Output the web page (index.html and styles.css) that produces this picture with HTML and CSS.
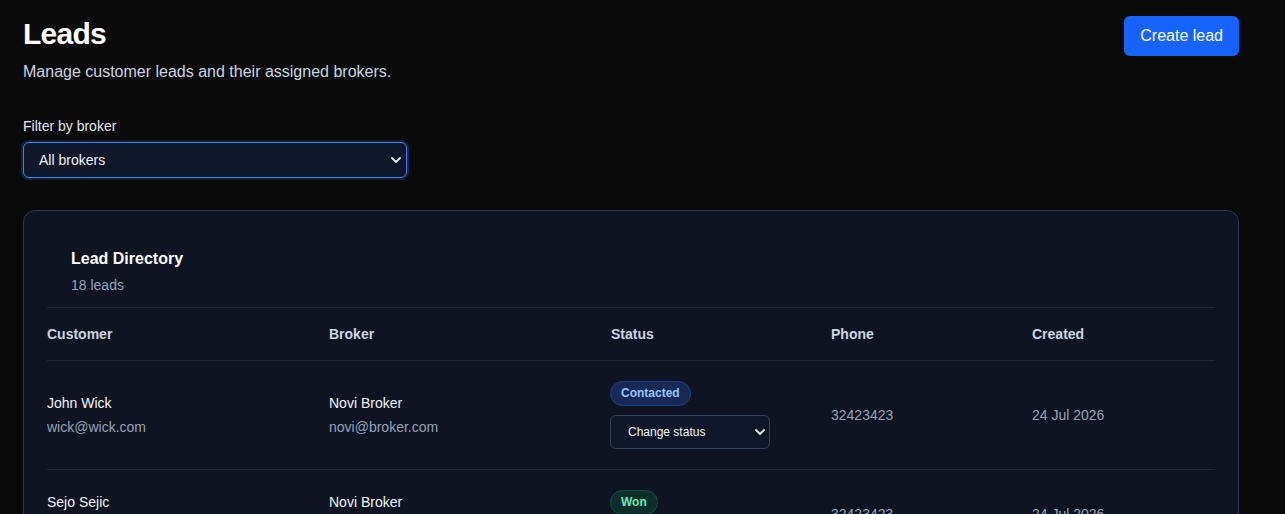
FILE: index.html
```html
<!DOCTYPE html>
<html lang="en">
<head>
<meta charset="utf-8">
<title>Leads</title>
<link rel="stylesheet" href="styles.css">
</head>
<body>
<main class="page">
  <header class="page-head">
    <div>
      <h1 class="title">Leads</h1>
      <p class="subtitle">Manage customer leads and their assigned brokers.</p>
    </div>
    <button class="btn-primary" type="button">Create lead</button>
  </header>

  <section class="filter">
    <label class="filter-label" for="broker">Filter by broker</label>
    <div class="select-wrap filter-select-wrap">
      <select id="broker" class="select filter-select">
        <option>All brokers</option>
      </select>
      <svg class="chev" viewBox="0 0 10 6" width="10" height="6"><path d="M1 1l4 4 4-4" fill="none" stroke="currentColor" stroke-width="1.8" stroke-linecap="round" stroke-linejoin="round"/></svg>
    </div>
  </section>

  <section class="card">
    <div class="card-head">
      <h2 class="card-title">Lead Directory</h2>
      <p class="card-sub">18 leads</p>
    </div>
    <div class="table">
      <div class="row head-row">
        <div class="cell">Customer</div>
        <div class="cell">Broker</div>
        <div class="cell">Status</div>
        <div class="cell">Phone</div>
        <div class="cell">Created</div>
      </div>
      <div class="row">
        <div class="cell">
          <div class="primary">John Wick</div>
          <div class="secondary">wick@wick.com</div>
        </div>
        <div class="cell">
          <div class="primary">Novi Broker</div>
          <div class="secondary">novi@broker.com</div>
        </div>
        <div class="cell status-cell">
          <span class="badge badge-contacted">Contacted</span>
          <div class="select-wrap status-select-wrap">
            <select class="select status-select">
              <option>Change status</option>
            </select>
            <svg class="chev" viewBox="0 0 10 6" width="10" height="6"><path d="M1 1l4 4 4-4" fill="none" stroke="currentColor" stroke-width="1.8" stroke-linecap="round" stroke-linejoin="round"/></svg>
          </div>
        </div>
        <div class="cell muted">32423423</div>
        <div class="cell muted">24 Jul 2026</div>
      </div>
      <div class="row row-compact">
        <div class="cell">
          <div class="primary">Sejo Sejic</div>
          <div class="secondary">sejo@sejic.com</div>
        </div>
        <div class="cell">
          <div class="primary">Novi Broker</div>
          <div class="secondary">novi@broker.com</div>
        </div>
        <div class="cell status-cell">
          <span class="badge badge-won">Won</span>
          <div class="select-wrap status-select-wrap">
            <select class="select status-select">
              <option>Change status</option>
            </select>
            <svg class="chev" viewBox="0 0 10 6" width="10" height="6"><path d="M1 1l4 4 4-4" fill="none" stroke="currentColor" stroke-width="1.8" stroke-linecap="round" stroke-linejoin="round"/></svg>
          </div>
        </div>
        <div class="cell muted">32423423</div>
        <div class="cell muted">24 Jul 2026</div>
      </div>
    </div>
  </section>
</main>
</body>
</html>
```

FILE: styles.css
```css
* { box-sizing: border-box; }

html, body {
  margin: 0;
  background: #0a0a0a;
  color: #f1f5f9;
  font-family: "Liberation Sans", Arial, sans-serif;
}

.page {
  width: 1262px;
  padding: 16px 23px 0 23px;
}

.page-head {
  display: flex;
  justify-content: space-between;
  align-items: flex-start;
}

.title {
  margin: 0;
  font-size: 30px;
  line-height: 36px;
  font-weight: 700;
  letter-spacing: -0.75px;
  color: #ffffff;
}

.subtitle {
  margin: 8px 0 0;
  font-size: 16px;
  line-height: 24px;
  color: #cbd5e1;
}

.btn-primary {
  height: 40px;
  padding: 0 16px;
  border: 0;
  border-radius: 6px;
  background: #1763ff;
  color: #ffffff;
  font-family: inherit;
  font-size: 16px;
}

.filter {
  margin-top: 32px;
}

.filter-label {
  display: block;
  font-size: 14px;
  line-height: 20px;
  color: #e2e8f0;
}

.select-wrap {
  position: relative;
}

.select {
  appearance: none;
  -webkit-appearance: none;
  width: 100%;
  margin: 0;
  font-family: inherit;
  color: #f1f5f9;
  background: #0f172a;
  outline: none;
}

.chev {
  position: absolute;
  top: 50%;
  margin-top: -3px;
  color: #e2e8f0;
  pointer-events: none;
}

.filter-select-wrap {
  margin-top: 6px;
  width: 384px;
}

.filter-select {
  height: 36px;
  padding: 0 30px 0 15px;
  font-size: 14px;
  border: 1px solid #3b82f6;
  border-radius: 6px;
  box-shadow: 0 0 0 2px rgba(37, 99, 235, 0.25);
}

.filter-select-wrap .chev { right: 6px; }

.card {
  margin-top: 32px;
  background: #0e1422;
  border: 1px solid #2b374c;
  border-radius: 12px;
  padding: 24px 23px 0;
}

.card-head {
  padding: 12px 24px;
}

.card-title {
  margin: 0;
  font-size: 16px;
  line-height: 24px;
  font-weight: 700;
  color: #ffffff;
}

.card-sub {
  margin: 4px 0 0;
  font-size: 14px;
  line-height: 20px;
  color: #94a3b8;
}

.table {
  border-top: 1px solid #1f2a3c;
}

.row {
  display: grid;
  grid-template-columns: 282px 282px 220px 201px 1fr;
  align-items: center;
  border-bottom: 1px solid #1f2a3c;
  font-size: 14px;
  line-height: 20px;
}

.cell {
  padding: 20px 0;
}

.head-row {
  font-weight: 700;
  color: #cbd5e1;
}

.head-row .cell {
  padding: 16px 0;
}

.primary { color: #f1f5f9; }

.secondary {
  margin-top: 4px;
  color: #94a3b8;
}

.muted { color: #94a3b8; }

.status-cell {
  display: flex;
  flex-direction: column;
  align-items: flex-start;
  gap: 9px;
  margin-left: -1px;
}

.row-compact .status-cell {
  align-self: start;
  padding-bottom: 0;
}

.badge {
  display: inline-block;
  padding: 3px 10px;
  border-radius: 999px;
  font-size: 12px;
  line-height: 17px;
  font-weight: 700;
}

.badge-contacted {
  background: #172a55;
  border: 1px solid #1e3f86;
  color: #93c5fd;
}

.badge-won {
  background: #0a2e2a;
  border: 1px solid #11513f;
  color: #6ee7b7;
}

.status-select-wrap { width: 160px; }

.status-select {
  height: 34px;
  padding: 0 26px 0 17px;
  font-size: 12px;
  border: 1px solid #334155;
  border-radius: 6px;
}

.status-select-wrap .chev { right: 5px; }
```
